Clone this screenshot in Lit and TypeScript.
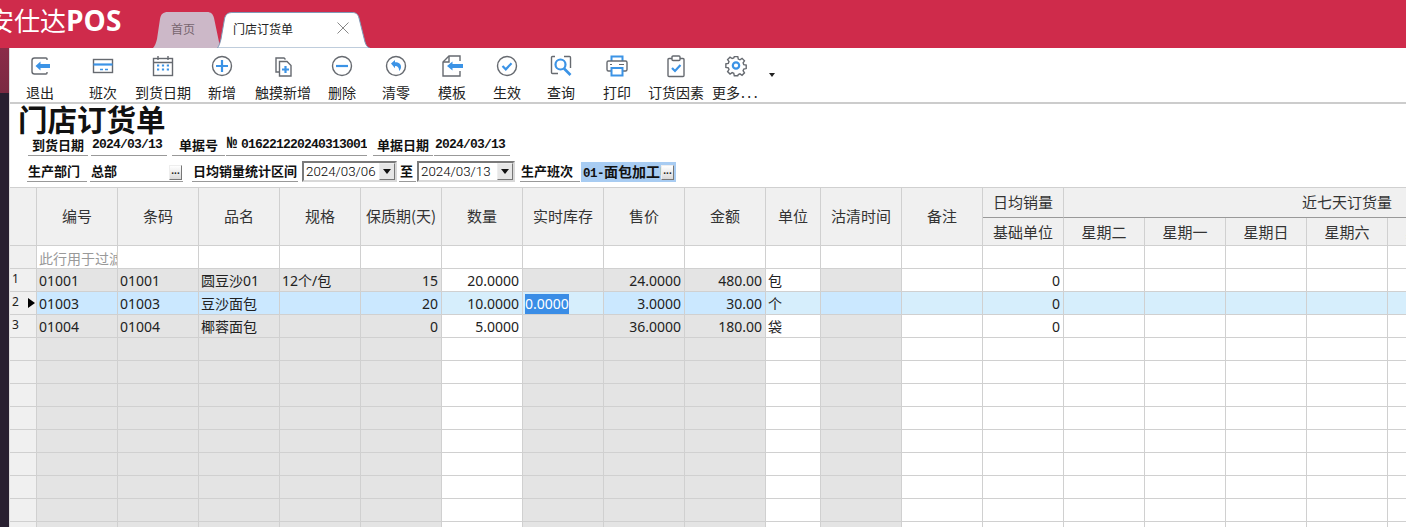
import { LitElement, html, css, svg } from "lit";
import { customElement } from "lit/decorators.js";

const G = "#666a70";
const B = "#3b93e6";
const S = "1.4";
const icons: Record<string, unknown> = {
  exit: svg`<path d="M19 6V5a1 1 0 0 0-1-1H6.500A2.500 2.500 0 0 0 4 6.500v11A2.500 2.500 0 0 0 6.500 20H18a1 1 0 0 0 1-1v-1" fill="none" stroke="${G}" stroke-width="${S}"/><path d="M7.500 12l5-4.500V10H22v4h-9.500v2.500z" fill="${B}"/>`,
  shift: svg`<rect x="2.500" y="5.500" width="19" height="13" fill="none" stroke="${G}" stroke-width="${S}"/><path d="M2.500 10.500h19" stroke="${B}" stroke-width="2.200"/><path d="M9 15.500h3M14 15.500h3" stroke="${B}" stroke-width="1.600"/>`,
  cal: svg`<rect x="2.500" y="4.500" width="19" height="17" fill="none" stroke="${G}" stroke-width="${S}"/><path d="M2.500 8.500h19M7 2v4M17 2v4" fill="none" stroke="${G}" stroke-width="${S}"/><path d="M6 11.500h2.200M10.900 11.500h2.200M15.800 11.500h2.200M6 15.500h2.200M10.900 15.500h2.200M15.800 15.500h2.200" stroke="${B}" stroke-width="2"/>`,
  add: svg`<circle cx="12" cy="12" r="9.500" fill="none" stroke="${G}" stroke-width="${S}"/><path d="M12 6v12M6 12h12" stroke="${B}" stroke-width="2.200"/>`,
  touch: svg`<path d="M8 18H5V4h8l1.500 1.500" fill="none" stroke="${G}" stroke-width="${S}"/><path d="M8.500 7.500h7.500l4 4v10.500H8.500z" fill="none" stroke="${G}" stroke-width="${S}"/><path d="M14.500 12v7M11 15.500h7" stroke="${B}" stroke-width="2.200"/>`,
  del: svg`<circle cx="12" cy="12" r="9.500" fill="none" stroke="${G}" stroke-width="${S}"/><path d="M6 12h12" stroke="${B}" stroke-width="2.200"/>`,
  undo: svg`<circle cx="12" cy="12" r="9.500" fill="none" stroke="${G}" stroke-width="${S}"/><path d="M7 9.500l4-3.500v2.300c4 0 6 2 6 4.700 0 1.700-.8 3-2 4 .4-3-1-5-4-5v2.200z" fill="${B}"/>`,
  tpl: svg`<path d="M20 7V2H9L3 8v14h17v-5" fill="none" stroke="${G}" stroke-width="${S}"/><path d="M9 2v6H3" fill="none" stroke="${G}" stroke-width="${S}"/><path d="M7 12l5.500-4.500V10H23v4H12.500v2.500z" fill="${B}"/>`,
  ok: svg`<circle cx="12" cy="12" r="9.500" fill="none" stroke="${G}" stroke-width="${S}"/><path d="M7.500 12l3.300 3.300 5.700-6" fill="none" stroke="${B}" stroke-width="2.200"/>`,
  find: svg`<path d="M6 2.500H3.500a1 1 0 0 0-1 1v15a1 1 0 0 0 1 1H9M15 2.500h5.500a1 1 0 0 1 1 1V14" fill="none" stroke="${G}" stroke-width="${S}"/><circle cx="11.500" cy="10.500" r="5" fill="none" stroke="${B}" stroke-width="2.200"/><path d="M15 14.500l6.500 6.500" stroke="${B}" stroke-width="2.600"/>`,
  print: svg`<path d="M6.500 7V2.500h11V7" fill="none" stroke="${B}" stroke-width="2"/><path d="M6 17H3.500a1.500 1.500 0 0 1-1.500-1.500v-7A1.500 1.500 0 0 1 3.500 7h17A1.500 1.500 0 0 1 22 8.500v7a1.500 1.500 0 0 1-1.500 1.500H18" fill="none" stroke="${G}" stroke-width="${S}"/><rect x="6.500" y="14" width="11" height="7.500" fill="none" stroke="${B}" stroke-width="2"/><path d="M5 10.500h2M14 10.500h5" stroke="${G}" stroke-width="1.100"/>`,
  clip: svg`<path d="M8 4.500H5a1 1 0 0 0-1 1v16a1 1 0 0 0 1 1h14a1 1 0 0 0 1-1v-16a1 1 0 0 0-1-1h-3" fill="none" stroke="${G}" stroke-width="${S}"/><rect x="8" y="2" width="8" height="4.500" rx="1" fill="none" stroke="${G}" stroke-width="${S}"/><path d="M8 14l3 3 5.500-6" fill="none" stroke="${B}" stroke-width="2.200"/>`,
  gear: svg`<path d="M10 2h4l.6 2.800 1.900.8 2.400-1.600 2.800 2.800-1.600 2.400.8 1.900 2.800.6v4l-2.800.6-.8 1.900 1.600 2.400-2.800 2.800-2.400-1.600-1.900.8L14 24h-4l-.6-2.800-1.900-.8-2.400 1.600-2.800-2.800 1.600-2.400-.8-1.900L.3 14.300v-4l2.800-.6.8-1.900L2.300 5.400l2.800-2.800 2.400 1.600 1.900-.8z" transform="translate(1.600 .9) scale(.87)" fill="none" stroke="${G}" stroke-width="1.600"/><circle cx="12" cy="11.500" r="3.200" fill="none" stroke="${B}" stroke-width="2.200"/>`,
};

const tools: [string, string][] = [
  ["exit", "退出"], ["shift", "班次"], ["cal", "到货日期"], ["add", "新增"], ["touch", "触摸新增"], ["del", "删除"],
  ["undo", "清零"], ["tpl", "模板"], ["ok", "生效"], ["find", "查询"], ["print", "打印"], ["clip", "订货因素"], ["gear", "更多"],
];

const grayCols = new Set([1, 2, 3, 4, 5, 7, 8, 9, 11]);
const COLS = 21;
const data: Record<number, string>[] = [
  { 1: "01001", 2: "01001", 3: "圆豆沙01", 4: "12个/包", 5: "15", 6: "20.0000", 8: "24.0000", 9: "480.00", 10: "包", 13: "0" },
  { 1: "01003", 2: "01003", 3: "豆沙面包", 5: "20", 6: "10.0000", 7: "0.0000", 8: "3.0000", 9: "30.00", 10: "个", 13: "0" },
  { 1: "01004", 2: "01004", 3: "椰蓉面包", 5: "0", 6: "5.0000", 8: "36.0000", 9: "180.00", 10: "袋", 13: "0" },
];
const rightCols = new Set([5, 6, 8, 9, 13]);
const ROWS = 12;

@customElement("app-root")
export class AppRoot extends LitElement {
  static styles = css`
    :host { display: block; width: 1406px; height: 527px; overflow: hidden; background: #fff; font-family: "Noto Sans CJK SC", "Noto Sans", sans-serif; color: #222; }
    .top { height: 48px; background: #cf2b4b; display: flex; }
    .brand { margin-left: -12px; width: 165px; flex: none; color: #fff; font-size: 26px; line-height: 40px; white-space: nowrap; }
    .brand b { font-family: "Open Sans", "Liberation Sans", sans-serif; font-weight: 700; font-size: 28px; }
    .tabs { display: flex; align-items: flex-end; height: 48px; }
    .tab { position: relative; height: 36px; font-size: 12px; line-height: 34px; box-sizing: border-box; flex: none; }
    .tab svg { position: absolute; left: 0; top: 0; }
    .tab span { position: relative; }
    .t1 { width: 67px; color: #77656f; padding-left: 18px; }
    .t2 { width: 153px; color: #222; padding-left: 16px; margin-left: -3px; }
    .t2 .x { position: absolute; left: 119px; top: 9px; }
    .body { display: flex; height: 479px; }
    .side { width: 9px; flex: none; display: flex; flex-direction: column; border-right: 1px solid #ddd; }
    .side i { display: block; height: 45px; background: linear-gradient(#8a2c48, #7b2a42); }
    .side u { display: block; flex: 1; background: #281f30; }
    .main { flex: 1; min-width: 0; overflow: hidden; }
    .toolbar { height: 54px; border-bottom: 2px solid #ccc; display: grid; grid-template-columns: 60px 66px 54px 64px 58px 60px 48px 64px 46px 62px 50px 68px 52px 20px; }
    .tool { display: flex; flex-direction: column; align-items: center; font-size: 14px; white-space: nowrap; padding-top: 6px; }
    .tool svg { width: 24px; height: 24px; flex: none; }
    .tool span { line-height: 20px; margin-top: 4px; }
    .tool .dots { letter-spacing: 2.400px; margin: 0 0 0 1px; }
    .caret { align-self: end; margin: 0 0 25px 7px; width: 0; height: 0; border: 3px solid transparent; border-top: 4px solid #222; border-bottom: 0; }
    h1 { margin: 0 0 0 8px; height: 29px; font-size: 29.500px; line-height: 29px; font-weight: 700; color: #111; white-space: nowrap; }
    .form { display: flex; align-items: flex-end; height: 23px; font-size: 13px; font-weight: 700; color: #111; white-space: nowrap; }
    .r1 { padding-left: 18px; }
    .r2 { padding-left: 17px; margin-top: 3px; }
    .f { border-bottom: 1px solid #999; height: 20px; line-height: 17px; box-sizing: border-box; flex: none; overflow: hidden; }
    .lab { text-align: center; }
    .r2 .lab { text-align: left; padding-left: 1px; }
    .val { padding-left: 1px; }
    .mono { font-family: "Liberation Mono", monospace; font-size: 13px; letter-spacing: -0.800px; }
    .no { font-size: 17px; line-height: 14px; letter-spacing: 3.800px; }
    .w60 { width: 60px; } .w76 { width: 76px; } .w53 { width: 53px; } .w141 { width: 141px; } .w93 { width: 93px; } .w106 { width: 106px; } .w17 { width: 17px; }
    .m1 { margin-left: 1px; } .m2 { margin-left: 2px; } .m3 { margin-left: 3px; } .m4 { margin-left: 4px; } .m5 { margin-left: 5px; } .m6 { margin-left: 6px; } .m9 { margin-left: 9px; }
    .btn { width: 13px; height: 15px; box-sizing: border-box; background: linear-gradient(#fff, #d9d9d9); border: 1px solid; border-color: #eee #777 #777 #eee; color: #222; font: 700 10px/9px "Liberation Sans", sans-serif; text-align: center; flex: none; }
    .pick { position: relative; display: flex; justify-content: flex-end; padding-right: 1px; align-items: flex-end; }
    .pick .name { position: absolute; left: 1px; top: 0; }
    .pick .btn { position: relative; margin-bottom: 1px; }
    .date { width: 95px; height: 21px; box-sizing: border-box; border: 2px solid; border-color: #7a7a7a #d8d8d8 #d8d8d8 #7a7a7a; flex: none; display: flex; justify-content: space-between; font: 300 13.300px/17px Roboto, "Liberation Sans", sans-serif; color: #000; padding-left: 2px; overflow: hidden; }
    .d2 { width: 98px; margin-left: 1px; }
    .drop { width: 16px; height: 17px; box-sizing: border-box; border: 1px solid; border-color: #eee #777 #777 #eee; background: #e6e6e6; display: flex; align-items: center; justify-content: center; flex: none; }
    .drop i { width: 0; height: 0; border: 4px solid transparent; border-top: 5px solid #111; border-bottom: 0; }
    .sel { position: relative; width: 95px; height: 20px; background: #a8ccf2; flex: none; margin-left: 1px; padding-left: 2px; box-sizing: border-box; font-size: 14px; line-height: 18px; }
    .sel .txt { display: block; width: 78px; overflow: hidden; }
    .sel .mono { font-size: 12.500px; letter-spacing: -0.500px; }
    .sel .btn { position: absolute; left: 80px; top: 3px; }
    .grid { display: grid; width: 1650px; margin-top: 5px; border-top: 1px solid #d0d0d0; grid-template-columns: 27px repeat(9, 81px) 55px repeat(10, 81px); grid-template-rows: 30px 28px; grid-auto-rows: 23px; font-family: "Noto Sans", "Noto Sans CJK SC", sans-serif; font-size: 14px; }
    .c { box-sizing: border-box; border-right: 1px solid #d0d0d0; border-bottom: 1px solid #d0d0d0; padding: 2px 3px 0 2px; line-height: 20px; overflow: hidden; white-space: nowrap; background: #fff; color: #222; }
    .gray { background: #e4e4e4; }
    .r { text-align: right; }
    .rowno { background: #f0f0f0; font-size: 12px; line-height: 16px; padding: 2px 0 0 2px; position: relative; }
    .arrow { position: absolute; left: 18px; top: 6px; width: 0; height: 0; border: 5px solid transparent; border-left: 7px solid #000; border-right: 0; }
    .selrow { background: #d6eefc; }
    .selrow.gray { background: #cbe8ff; }
    .hi { display: inline-block; background: #3a8de6; color: #fff; line-height: 20px; }
    .h { background: #f0f0f0; font-family: "Noto Sans CJK SC", sans-serif; font-size: 15px; display: flex; align-items: center; justify-content: center; padding: 0; color: #333; }
    .span2 { grid-row: span 2; padding-bottom: 1px; }
    .dark { border-bottom-color: #999; padding-bottom: 1px; }
    .wide { grid-column: span 7; }
    .filter { color: #999; font-family: "Noto Sans CJK SC", sans-serif; }
    .head0 { background: #f0f0f0; }
  `;

  render() {
    const heads = ["编号", "条码", "品名", "规格", "保质期(天)", "数量", "实时库存", "售价", "金额", "单位", "沽清时间", "备注"];
    const days = ["星期二", "星期一", "星期日", "星期六", "星期五", "星期四", "星期三"];
    const cols = Array.from({ length: COLS - 1 }, (_, i) => i + 1);
    return html`
      <div class="top">
        <div class="brand">安仕达<b>POS</b></div>
        <div class="tabs">
          <div class="tab t1">
            <svg width="67" height="36" viewBox="0 0 67 36"><path d="M0 36C2 34 3 31 4 27L7 7C8 2 10 0 15 0H54C58 0 60 2 61 6L66 30C66 33 67 35 67 36Z" fill="#ccb8c8"/></svg>
            <span>首页</span>
          </div>
          <div class="tab t2">
            <svg width="153" height="36" viewBox="0 0 153 36"><path d="M.5 36C2 34 3 31 4 27L7.500 7C8.500 2 11 .5 16 .5H135C139 .5 141 2 142 6L148 30C149 33 150 35 152.500 36Z" fill="#fff" stroke="#7f9ab8" stroke-width="1"/></svg>
            <span>门店订货单</span>
            <svg class="x" width="14" height="14" viewBox="0 0 14 14"><path d="M1.500 1.500l11 11M12.500 1.500l-11 11" stroke="#888" stroke-width="1"/></svg>
          </div>
        </div>
      </div>
      <div class="body">
        <div class="side"><i></i><u></u></div>
        <div class="main">
          <div class="toolbar">
            ${tools.map(([ic, t]) => html`<div class="tool"><svg viewBox="0 0 24 24">${icons[ic]}</svg><span>${t}${ic === "gear" ? html`<span class="dots">...</span>` : ""}</span></div>`)}
            <div class="caret"></div>
          </div>
          <h1>门店订货单</h1>
          <div class="form r1">
            <div class="f lab w60">到货日期</div>
            <div class="f val mono w76 m3">2024/03/13</div>
            <div class="f lab w53 m5">单据号</div>
            <div class="f val mono w141 m1"><span class="no">№</span>016221220240313001</div>
            <div class="f lab w60 m6">单据日期</div>
            <div class="f val mono w76 m1">2024/03/13</div>
          </div>
          <div class="form r2">
            <div class="f lab w60">生产部门</div>
            <div class="f val pick w93 m3"><span class="name">总部</span><span class="btn">...</span></div>
            <div class="f lab w106 m9">日均销量统计区间</div>
            <div class="date m4">2024/03/06<span class="drop"><i></i></span></div>
            <div class="f lab w17 m2">至</div>
            <div class="date d2">2024/03/13<span class="drop"><i></i></span></div>
            <div class="f lab w60 m5">生产班次</div>
            <div class="sel"><span class="txt"><span class="mono">01-</span>面包加工中心</span><span class="btn">...</span></div>
          </div>
          <div class="grid">
            <div class="c head0 span2"></div>
            ${heads.map((h) => html`<div class="c h span2">${h}</div>`)}
            <div class="c h dark">日均销量</div>
            <div class="c h dark wide">近七天订货量</div>
            <div class="c h">基础单位</div>
            ${days.map((d) => html`<div class="c h">${d}</div>`)}
            <div class="c rowno"></div>
            ${cols.map((c) => html`<div class="c ${c === 1 ? "filter" : ""}">${c === 1 ? "此行用于过滤" : ""}</div>`)}
            ${Array.from({ length: ROWS }, (_, r) => {
              const d = data[r] ?? {};
              const sel = r === 1;
              return html`
                <div class="c rowno">${r < 3 ? r + 1 : ""}${sel ? html`<span class="arrow"></span>` : ""}</div>
                ${cols.map((c) => {
                  const g = grayCols.has(c) && !(sel && c === 7);
                  const cls = `c ${g ? "gray" : ""} ${sel ? "selrow" : ""} ${rightCols.has(c) ? "r" : ""}`;
                  return html`<div class="${cls}">${sel && c === 7 ? html`<span class="hi">${d[c]}</span>` : d[c] ?? ""}</div>`;
                })}
              `;
            })}
          </div>
        </div>
      </div>
    `;
  }
}
